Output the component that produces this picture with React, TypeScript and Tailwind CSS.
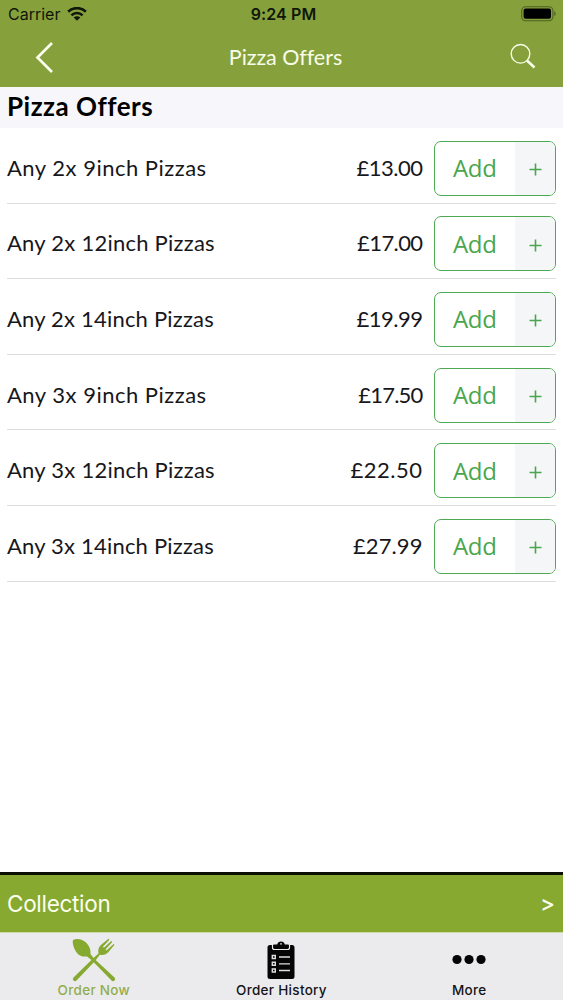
const offers = [
	{ name: "Any 2x 9inch Pizzas", price: "£13.00", nameSpacing: "tracking-[0.5px]", priceSpacing: "tracking-[-0.5px]" },
	{ name: "Any 2x 12inch Pizzas", price: "£17.00", nameSpacing: "tracking-[0.25px]", priceSpacing: "tracking-[-0.6px]" },
	{ name: "Any 2x 14inch Pizzas", price: "£19.99", nameSpacing: "tracking-[0.2px]", priceSpacing: "tracking-[-0.5px]" },
	{ name: "Any 3x 9inch Pizzas", price: "£17.50", nameSpacing: "tracking-[0.5px]", priceSpacing: "tracking-[-0.8px]" },
	{ name: "Any 3x 12inch Pizzas", price: "£22.50", nameSpacing: "tracking-[0.25px]", priceSpacing: "tracking-[0.5px]" },
	{ name: "Any 3x 14inch Pizzas", price: "£27.99", nameSpacing: "tracking-[0.2px]", priceSpacing: "tracking-[0.1px]" },
];

const tabs = [
	{ label: "Order Now", icon: CutleryIcon, active: true },
	{ label: "Order History", icon: ClipboardIcon, active: false },
	{ label: "More", icon: MoreIcon, active: false },
];

function WifiIcon() {
	return (
		<svg width="20" height="14" viewBox="0 0 20 14" fill="none" stroke="#10160a">
			<path d="M1.2 4.8a12.6 12.6 0 0 1 17.6 0" strokeWidth="2.8" />
			<path d="M4.4 8.4a7.9 7.9 0 0 1 11.2 0" strokeWidth="2.6" />
			<path d="M10 13.7 6.7 10.500a4.700 4.700 0 0 1 6.600 0Z" fill="#10160a" stroke="none" />
		</svg>
	);
}

function BatteryIcon() {
	return (
		<svg width="36" height="16" viewBox="0 0 36 16" fill="none">
			<rect x="0.7" y="0.7" width="31.2" height="14" rx="4" stroke="#4d6224" strokeWidth="1.1" />
			<rect x="2.6" y="2.6" width="27.4" height="10.2" rx="2" fill="#000" />
			<path d="M33.2 5.3c1.9.8 1.9 4 0 4.8Z" fill="#4d6224" />
		</svg>
	);
}

function CutleryIcon() {
	return (
		<svg width="44" height="44" viewBox="0 0 44 44" fill="#86a92f">
			<path d="M1 2c4-2 9.500-1 13.500 3 3 3 4.500 7 4 11l3.500 4.500L42.500 39.500a2 2 0 0 1-3 3L19.500 22l-4.500-3.500c-4 .5-7.500-.5-10-3.500C2 11 0 5.500 1 2Z" />
			<path d="M1.500 39.500 21.500 20l5-4.500c-.8-3.500.2-6.500 2.700-8.700l7.300-6 .9.900-6.500 7.100 1 1 7.300-6.700 1 1-6.700 7.300 1 1 7.100-6.500.9.900-6 7.300c-2.200 2.500-5.200 3.500-8.700 2.700L23.500 22.500 4.500 42.500a2.100 2.100 0 0 1-3-3Z" />
		</svg>
	);
}

function ClipboardIcon() {
	return (
		<svg width="28" height="40" viewBox="0 0 28 40" fill="none">
			<path d="M3 5h22a2.500 2.500 0 0 1 2.500 2.500v29A2.500 2.500 0 0 1 25 39H3a2.500 2.500 0 0 1-2.500-2.500v-29A2.500 2.500 0 0 1 3 5Z" fill="#050505" />
			<path d="M5.500 4.500v3a2 2 0 0 0 2 2h13a2 2 0 0 0 2-2v-3" stroke="#ebebed" strokeWidth="1.200" />
			<path d="M6.500 4.500h3.700a3.900 3.900 0 0 1 7.600 0h3.700V7A1.500 1.500 0 0 1 20 8.500H8A1.500 1.500 0 0 1 6.500 7Z" fill="#050505" />
			<circle cx="14" cy="3.900" r="0.800" fill="#ebebed" />
			<path d="M5.300 15.500h3v3h-3ZM5.300 22.300h3v3h-3ZM5.300 29h3v3h-3Z" stroke="#dedee0" strokeWidth="1.400" />
			<path d="M12 17h11M12 23.800h11M12 30.500h11" stroke="#dedee0" strokeWidth="1.300" />
		</svg>
	);
}

function MoreIcon() {
	return (
		<svg width="34" height="40" viewBox="0 0 34 40" fill="#050505">
			<circle cx="5" cy="19.500" r="4.600" />
			<circle cx="17" cy="19.500" r="4.600" />
			<circle cx="29" cy="19.500" r="4.600" />
		</svg>
	);
}

function StatusBar() {
	return (
		<div className="grid h-7 grid-cols-3 items-center pl-2 pr-1.5 font-['Inter'] text-[16px] text-[#10160a]">
			<div className="flex items-center gap-[7px]">
				<span>Carrier</span>
				<WifiIcon />
			</div>
			<span className="pl-0.5 text-center font-semibold tracking-[0.1px]">9:24 PM</span>
			<div className="flex justify-end">
				<BatteryIcon />
			</div>
		</div>
	);
}

function NavBar() {
	return (
		<div className="flex h-[57px] items-center justify-between pl-[35px] pr-[27px]">
			<button className="w-[27px]" aria-label="Back">
				<svg width="20" height="32" viewBox="0 0 20 32" fill="none" stroke="#fbfff0" strokeWidth="2.700">
					<path d="M17 2 2.500 16.500 17 31" />
				</svg>
			</button>
			<h1 className="text-[21.500px] leading-7 tracking-[-0.050px] text-[#f8fdea]">Pizza Offers</h1>
			<button aria-label="Search">
				<svg width="27" height="27" viewBox="0 0 27 27" fill="none" stroke="#f8fde8">
					<circle cx="11.500" cy="10.800" r="9.300" strokeWidth="1.400" />
					<path d="m18 17.500 7.500 7" strokeWidth="2.600" />
				</svg>
			</button>
		</div>
	);
}

function AddButton() {
	return (
		<button className="flex h-[55px] w-[122.500px] overflow-hidden rounded-[7px] border border-[#4fa953] text-[#4aa64c]">
			<span className="flex flex-1 items-center justify-center font-['Open_Sans'] text-[24px] tracking-[-0.300px]">Add</span>
			<span className="flex h-full w-10 items-center justify-center bg-[#f4f6f8] pt-[3px]">
				<svg width="13" height="13" viewBox="0 0 13 13" stroke="#4aa64c" strokeWidth="1.600">
					<path d="M6.500 .5v12M.5 6.500h12" />
				</svg>
			</span>
		</button>
	);
}

export default function App() {
	return (
		<div className="flex h-[1000px] w-[563px] flex-col overflow-hidden bg-white font-['Lato',sans-serif]">
			<header className="h-[87px] bg-[#86a13c]">
				<StatusBar />
				<NavBar />
			</header>

			<h2 className="flex h-[41px] items-center bg-[#f7f7fb] px-[7px] pb-0.5 text-[26px] font-bold tracking-[0.500px] text-black">
				Pizza Offers
			</h2>

			<ul className="flex-1 px-[7px]">
				{offers.map((offer) => (
					<li key={offer.name} className="flex h-[75.600px] items-center border-b border-[#dedee0] pt-1.5 text-[22px] text-[#17171b]">
						<span className={`flex-1 pb-0.5 ${offer.nameSpacing}`}>{offer.name}</span>
						<span className={`mr-[11px] pb-0.5 ${offer.priceSpacing}`}>{offer.price}</span>
						<AddButton />
					</li>
				))}
			</ul>

			<div className="flex h-[60px] items-center justify-between border-t-[3px] border-[#0c1003] bg-[#87a930] pl-[7px] pr-2 text-[#fbffef]">
				<span className="font-['Inter'] text-[22.500px] tracking-[-0.300px]">Collection</span>
				<span className="font-['Inter'] text-[22px] font-medium">&gt;</span>
			</div>

			<nav className="grid h-[68px] grid-cols-3 border-t border-[#cfdba9] bg-[#ebebed] font-['Inter'] text-[13.500px] font-medium tracking-[0.300px]">
				{tabs.map((tab) => (
					<a key={tab.label} className={tab.active ? "flex flex-col items-center pt-1 text-[#93ad4d]" : "flex flex-col items-center pt-1 text-[#141416]"}>
						<span className="flex h-[45px] items-center">
							<tab.icon />
						</span>
						<span className="leading-[16px]">{tab.label}</span>
					</a>
				))}
			</nav>
		</div>
	);
}
